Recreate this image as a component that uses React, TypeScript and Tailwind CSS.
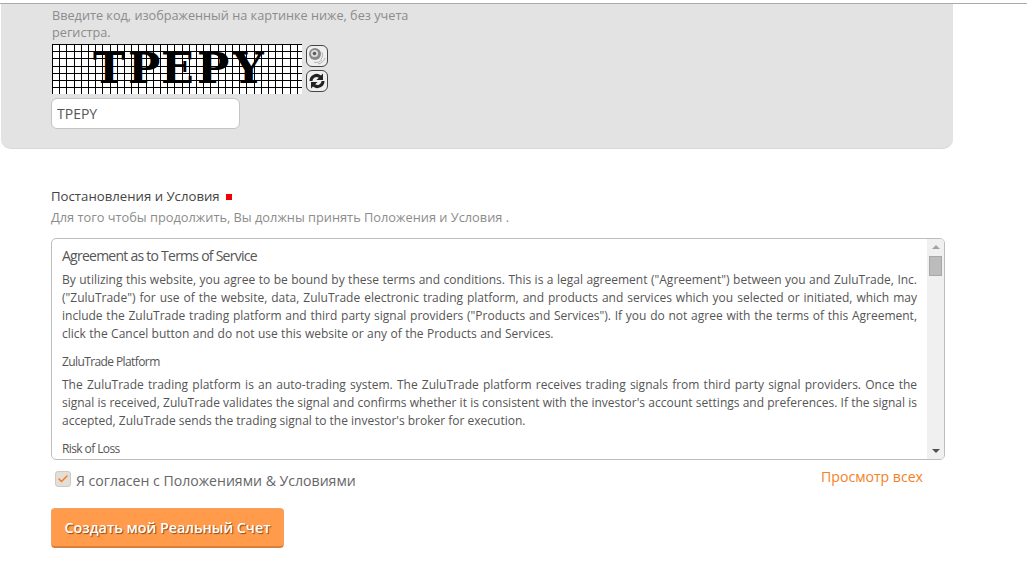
import { Check } from 'lucide-react'

const font = { fontFamily: '"Open Sans", sans-serif' }

// Captcha grid lines, every 7.2px
const gridX = Array.from({ length: 35 }, (_, i) => Math.round(i * 7.2) + 0.5)
const gridY = Array.from({ length: 7 }, (_, i) => Math.round(i * 7.2) + 0.5)

function Captcha() {
  return (
    <svg width="250" height="50" className="block bg-white shrink-0">
      {gridX.map((x) => (
        <line key={x} x1={x} x2={x} y1="0" y2="50" stroke="#000" />
      ))}
      {gridY.map((y) => (
        <line key={y} x1="0" x2="250" y1={y} y2={y} stroke="#000" />
      ))}
      <text
        x="41 76 109 145 181"
        y="39"
        fontFamily='"DejaVu Serif", serif'
        fontWeight="700"
        fontSize="43"
        fill="#000"
      >
        TPEPY
      </text>
    </svg>
  )
}

function SpeakerButton() {
  return (
    <div className="w-[22px] h-[22px] rounded-[6px] border border-[#444] bg-[#efefef] flex items-center justify-center">
      <svg width="20" height="20" viewBox="0 0 20 20">
        <circle cx="8" cy="8" r="6" fill="#8a8a8a" />
        <circle cx="7.5" cy="7.5" r="3.6" fill="#dedede" />
        <circle cx="7.5" cy="7.5" r="1.8" fill="#5c5c5c" />
        <path d="M15 6a7 7 0 0 1-1 7.5M7 16.5a9 9 0 0 0 8-2.5M11 18a9 9 0 0 0 7-6" stroke="#b5b5b5" fill="none" />
      </svg>
    </div>
  )
}

function RefreshButton() {
  return (
    <div className="w-[22px] h-[22px] rounded-[6px] border border-[#444] bg-[#efefef] flex items-center justify-center">
      <svg width="20" height="20" viewBox="0 0 20 20">
        <path d="M2.5 10A7 7 0 0 1 14 4.6L16 2.5V9h-6.500l2.300-2.300A4.200 4.200 0 0 0 5.400 10H2.500z" fill="#222" />
        <path d="M17.500 10A7 7 0 0 1 6 15.400L4 17.500V11h6.500l-2.300 2.300A4.200 4.200 0 0 0 14.600 10h2.900z" fill="#222" />
      </svg>
    </div>
  )
}

function TermsBox() {
  return (
    <div className="w-[894px] h-[222px] rounded-[5px] border border-[#bdbdbd] bg-white flex overflow-hidden">
      <div className="flex-1 h-full overflow-hidden pl-[10px] pr-[10px] text-[#555] text-[12px] leading-[18px] text-justify">
        <div className="text-[14px] leading-[18px] tracking-[-0.75px] text-[#555] pt-[8px] pb-[6px] text-left">
          Agreement as to Terms of Service
        </div>
        <p>
          By utilizing this website, you agree to be bound by these terms and conditions. This is a legal agreement
          ("Agreement") between you and ZuluTrade, Inc. ("ZuluTrade") for use of the website, data, ZuluTrade
          electronic trading platform, and products and services which you selected or initiated, which may include the
          ZuluTrade trading platform and third party signal providers ("Products and Services"). If you do not agree
          with the terms of this Agreement,{' '}
          <span className="[word-spacing:0.3px]">
            click the Cancel button and do not use this website or any of the Products and Services.
          </span>
        </p>
        <div className="tracking-[-0.6px] pt-[10px] pb-[5px] text-left">ZuluTrade Platform</div>
        <p>
          The ZuluTrade trading platform is an auto-trading system. The ZuluTrade platform receives trading signals from
          third party signal providers. Once the signal is received, ZuluTrade validates the signal and confirms whether
          it is consistent with the investor's account settings and preferences. If the signal is accepted, ZuluTrade
          sends the trading signal to the investor's broker for execution.
        </p>
        <div className="tracking-[-0.6px] pt-[10px] text-left">Risk of Loss</div>
      </div>
      <div className="w-[17px] h-full bg-[#f0f0f0] flex flex-col items-center shrink-0">
        <div className="w-0 h-0 mt-[6px] border-x-[4px] border-x-transparent border-b-[4px] border-b-[#a3a3a3]" />
        <div className="w-[13px] h-[20px] mt-[7px] bg-[#bcbcbc] border border-[#a8a8a8]" />
        <div className="w-0 h-0 mt-auto mb-[6px] border-x-[4px] border-x-transparent border-t-[4px] border-t-[#505050]" />
      </div>
    </div>
  )
}

export default function App() {
  return (
    <div className="w-[1027px] h-[577px] overflow-hidden bg-white" style={font}>
      <div className="h-[4px] bg-white border-b border-[#aaa]" />

      {/* Captcha panel */}
      <div className="w-[952px] h-[145px] ml-[1px] bg-[#e3e3e3] rounded-b-[10px] border-b border-[#d8d8d8] pl-[51px] pt-[3px]">
        <p className="w-[370px] text-[12.7px] leading-[17px] text-[#8c8c8c]">
          Введите код, изображенный на картинке ниже, без учета регистра.
        </p>
        <div className="flex gap-[4px] mt-[3px]">
          <Captcha />
          <div className="flex flex-col gap-[3px] pt-[1px]">
            <SpeakerButton />
            <RefreshButton />
          </div>
        </div>
        <input
          readOnly
          value="TPEPY"
          className="block w-[189px] h-[31px] mt-[4px] -ml-[1px] rounded-[6px] border border-[#c4c4c4] bg-white px-[5px] text-[14px] text-[#555] outline-none"
        />
      </div>

      {/* Terms */}
      <div className="pl-[51px] pt-[38px]">
        <div className="flex items-center text-[13.2px] leading-[18px] text-[#444]">
          Постановления и Условия
          <span className="w-[6px] h-[6px] bg-[#f00000] ml-[6px] mt-[2px]" />
        </div>
        <div className="text-[12.8px] leading-[18px] text-[#8c8c8c] mt-[3px]">
          Для того чтобы продолжить, Вы должны принять Положения и Условия .
        </div>
        <div className="mt-[12px]">
          <TermsBox />
        </div>

        <div className="flex items-start w-[872px] mt-[10px]">
          <label className="flex items-start ml-[4px] mt-[1px]">
            <span className="w-[16px] h-[16px] rounded-[3px] border border-[#cfcabf] bg-[#e2dfd9] flex items-center justify-center">
              <Check className="w-[12px] h-[12px] text-[#f47b20]" strokeWidth={3} />
            </span>
            <span className="ml-[5px] mt-[1px] text-[14.1px] leading-[18px] text-[#666]">
              Я согласен с Положениями & Условиями
            </span>
          </label>
          <a className="ml-auto -mt-[2px] text-[14.1px] leading-[18px] text-[#f5811f]">Просмотр всех</a>
        </div>

        <button className="block mt-[18px] w-[233px] h-[40px] rounded-[4px] bg-[#ff9b4b] border border-[#eda36a] border-b-2 border-b-[#d9803c] text-white text-[14.3px] font-semibold [text-shadow:1px_1px_1px_#8a4a14]">
          Создать мой Реальный Счет
        </button>
      </div>
    </div>
  )
}
